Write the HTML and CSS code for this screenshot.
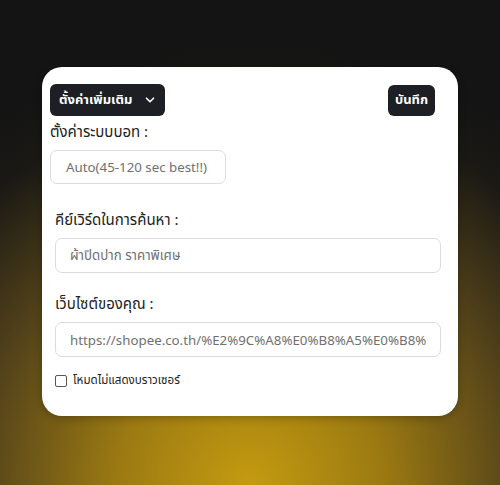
FILE: index.html
```html
<!DOCTYPE html>
<html lang="th">
<head>
<meta charset="utf-8">
<link rel="stylesheet" href="styles.css">
</head>
<body>
<div class="card">
  <div class="topbar">
    <button class="btn btn-menu">ตั้งค่าเพิ่มเติม
      <svg class="chev" width="12" height="12" viewBox="0 0 12 12"><path d="M2.5 4.2 L6 7.7 L9.5 4.2" fill="none" stroke="#fff" stroke-width="1.6" stroke-linecap="round" stroke-linejoin="round"/></svg>
    </button>
    <button class="btn btn-save">บันทึก</button>
  </div>
  <div class="field field-first">
    <div class="label">ตั้งค่าระบบบอท :</div>
    <div class="input input-small">Auto(45-120 sec best!!)</div>
  </div>
  <div class="field field-inset">
    <div class="label">คีย์เวิร์ดในการค้นหา :</div>
    <div class="input">ผ้าปิดปาก ราคาพิเศษ</div>
  </div>
  <div class="field field-inset">
    <div class="label">เว็บไซต์ของคุณ :</div>
    <div class="input">https://shopee.co.th/%E2%9C%A8%E0%B8%A5%E0%B8%</div>
  </div>
  <label class="check">
    <span class="box"></span>
    <span class="check-text">โหมดไม่แสดงบราวเซอร์</span>
  </label>
</div>
</body>
</html>
```
FILE: styles.css
```css
html, body {
  margin: 0;
  padding: 0;
}
body {
  width: 500px;
  height: 485px;
  overflow: hidden;
  font-family: "Noto Sans", "Noto Sans Thai", sans-serif;
  background: radial-gradient(ellipse 440px 440px at 50% 100%, #c49b10 0%, #9c7a12 30%, #53421a 62%, #1a1914 88%, #141414 100%);
  padding-top: 67px;
  box-sizing: border-box;
}
.card {
  margin-left: 42px;
  width: 416px;
  height: 349px;
  background: #fff;
  border-radius: 20px;
  box-shadow: 0 2px 8px rgba(0,0,0,0.25);
  box-sizing: border-box;
  padding: 17px 17px 0 8px;
  display: flex;
  flex-direction: column;
}
.topbar {
  display: flex;
  justify-content: space-between;
  align-items: center;
  height: 32px;
  margin-right: 6px;
}
.btn {
  border: none;
  background: #1e1f24;
  color: #fff;
  font-family: inherit;
  font-weight: 700;
  font-size: 13px;
  border-radius: 6px;
  height: 32px;
  padding: 0 8px;
  display: flex;
  align-items: center;
  gap: 10px;
}
.btn-menu { width: 115px; padding-left: 9px; }
.btn-save { width: 47px; height: 31px; justify-content: center; padding: 0; }
.chev { margin-left: 2px; }
.field { display: flex; flex-direction: column; }
.field-first { margin-top: 5px; }
.field-first .label { margin-bottom: 8px; }
.field-inset { padding-left: 5px; margin-top: 25px; }
.field-inset + .field-inset { margin-top: 20px; }
.label {
  font-size: 15px;
  color: #222;
  line-height: 21px;
  margin-bottom: 8px;
}
.input {
  height: 35px;
  border: 1px solid #dcdcdc;
  border-radius: 7px;
  box-sizing: border-box;
  padding: 0 14px;
  display: flex;
  align-items: center;
  font-size: 13.3px;
  color: #707070;
  white-space: nowrap;
  overflow: hidden;
}
.input-small { width: 176px; height: 34px; padding: 0 0 0 15px; }
.check {
  display: flex;
  align-items: center;
  gap: 6px;
  margin-top: 15px;
  padding-left: 5px;
}
.box {
  width: 10px;
  height: 10px;
  border: 1px solid #555;
  border-radius: 2px;
}
.check-text { font-size: 11.6px; color: #222; }
```
